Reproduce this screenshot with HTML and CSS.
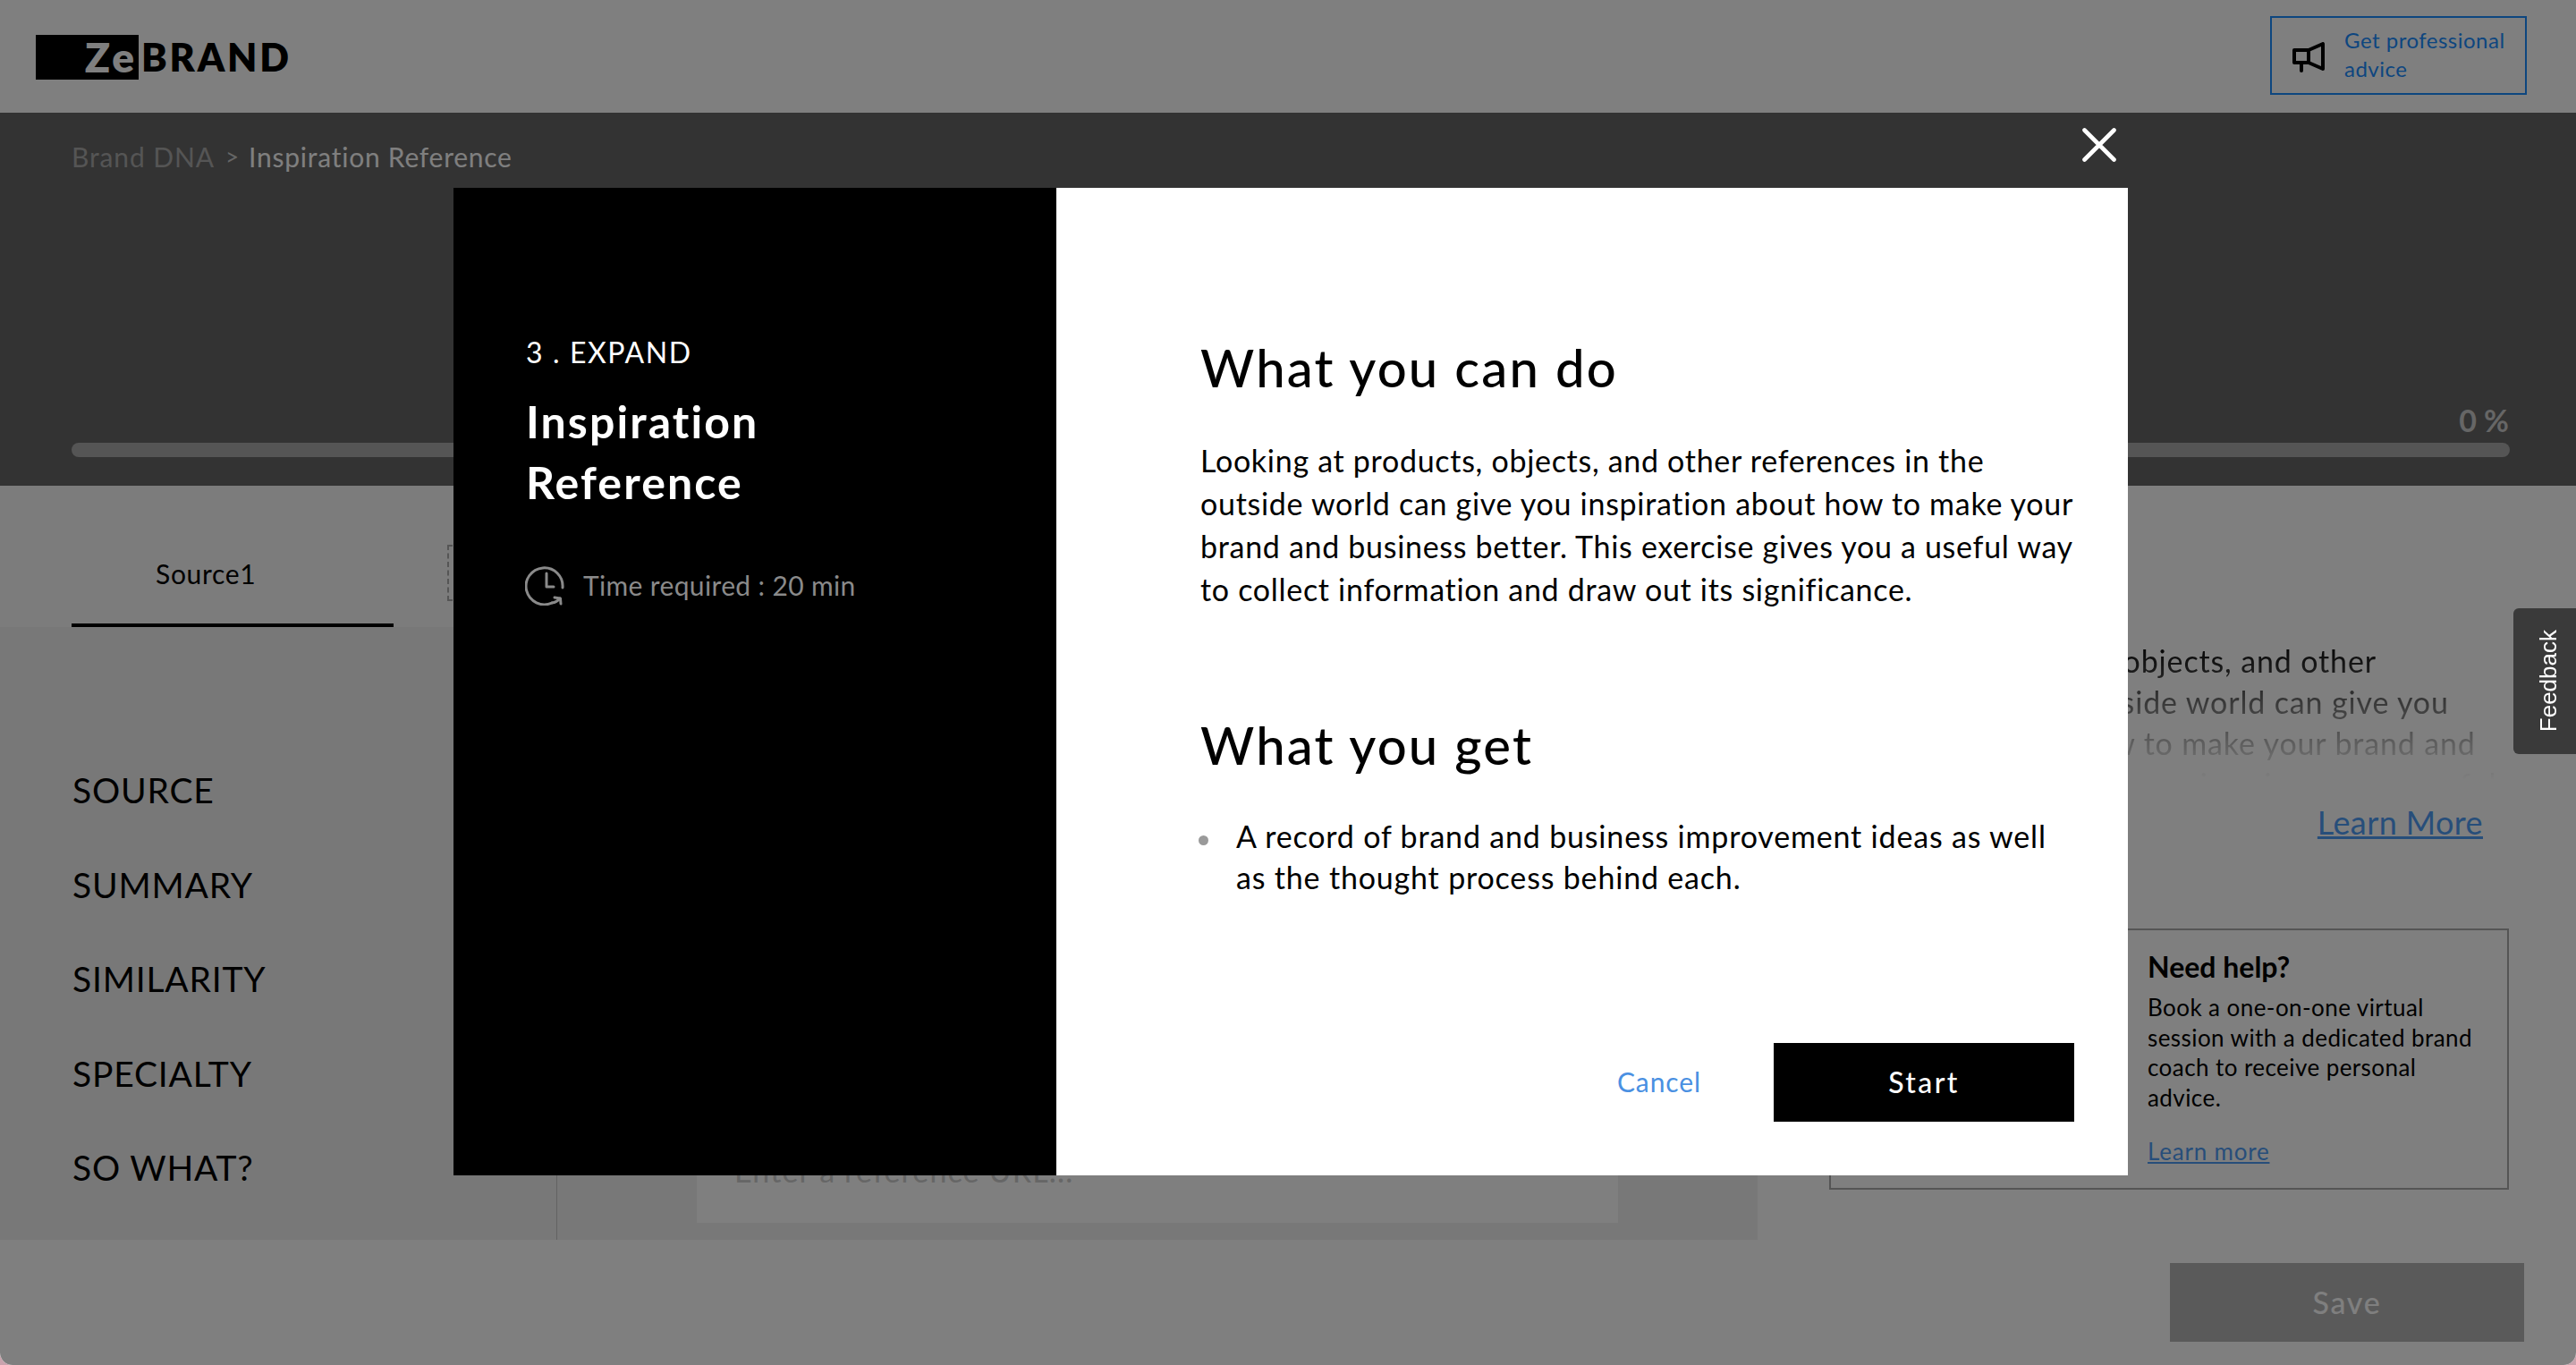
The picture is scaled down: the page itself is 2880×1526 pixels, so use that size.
FILE: index.html
```html
<!DOCTYPE html>
<html lang="en">
<head>
<meta charset="utf-8">
<title>ZeBRAND</title>
<link rel="stylesheet" href="styles.css">
</head>
<body>
<div class="page">
  <header class="topbar">
    <div class="logo"><span class="logo-mark">Ze</span><span class="logo-word">BRAND</span></div>
    <a class="advice">
      <svg class="advice-icon" viewBox="0 0 36 34" width="36" height="34" fill="none" stroke="#000" stroke-width="4" stroke-linecap="round" stroke-linejoin="round"><path d="M2 9h16v14H2z"/><path d="M18 9 34 2v28l-16-7"/><path d="M10 23v9"/></svg>
      <span class="advice-text">Get professional<br>advice</span>
    </a>
  </header>

  <section class="hero">
    <nav class="crumbs"><span class="crumb-dim">Brand DNA</span><span class="crumb-sep">&gt;</span><span class="crumb-now">Inspiration Reference</span></nav>
    <div class="percent">0 %</div>
    <div class="bar"></div>
  </section>

  <section class="workspace">
    <div class="work-left">
      <div class="tabs">
        <div class="tab">Source1</div>
        <div class="tab-add"></div>
      </div>
      <div class="work-main">
        <ul class="steps">
          <li>SOURCE</li>
          <li>SUMMARY</li>
          <li>SIMILARITY</li>
          <li>SPECIALTY</li>
          <li>SO WHAT?</li>
        </ul>
        <div class="editor">
          <div class="field">Enter a reference URL...</div>
        </div>
      </div>
    </div>
    <aside class="work-right">
      <p class="intro">Looking at products, objects, and other<br>references in the outside world can give you<br>inspiration about how to make your brand and<br>business better. This exercise gives you a useful</p>
      <a class="more">Learn More</a>
      <div class="help">
        <h3 class="help-title">Need help?</h3>
        <p class="help-text">Book a one-on-one virtual<br>session with a dedicated brand<br>coach to receive personal<br>advice.</p>
        <a class="help-link">Learn more</a>
      </div>
    </aside>
  </section>

  <footer class="footer"><button class="save">Save</button></footer>

  <div class="overlay">
    <div class="modal">
      <svg class="close" viewBox="0 0 38 38" width="38" height="38" fill="none" stroke="#fff" stroke-width="4.6" stroke-linecap="round"><path d="M2.5 2.5 35.5 35.5M35.5 2.5 2.5 35.5"/></svg>
      <div class="modal-side">
        <div class="side-step">3 . EXPAND</div>
        <h2 class="side-title">Inspiration<br>Reference</h2>
        <div class="side-time">
          <svg viewBox="0 0 44 44" width="44" height="44" fill="none" stroke="#8a8a8a" stroke-width="3" stroke-linecap="round" stroke-linejoin="round"><path d="M42 24A20.5 20.5 0 1 0 30 41"/><path d="M24 8v15h8"/><path d="M30 41c4-.5 7-2.500 9-5"/><path d="M33 35l6.500 1 .5 6"/></svg>
          <span class="side-time-text">Time required : 20 min</span>
        </div>
      </div>
      <div class="modal-body">
        <h2 class="body-head">What you can do</h2>
        <p class="body-text">Looking at products, objects, and other references in the<br>outside world can give you inspiration about how to make your<br>brand and business better. This exercise gives you a useful way<br>to collect information and draw out its significance.</p>
        <h2 class="body-head body-head-2">What you get</h2>
        <ul class="body-list"><li>A record of brand and business improvement ideas as well<br>as the thought process behind each.</li></ul>
        <div class="actions">
          <a class="cancel">Cancel</a>
          <button class="start">Start</button>
        </div>
      </div>
    </div>
  </div>

  <div class="feedback"><span>Feedback</span></div>
</div>
</body>
</html>
```
FILE: styles.css
```css
* { box-sizing: border-box; }
html, body { margin: 0; padding: 0; }
body { background: #c9a3ad; font-family: "Lato", "Noto Sans", sans-serif; color: #000; }
h2, h3, p, ul { margin: 0; padding: 0; }
ul { list-style: none; }

.page { position: relative; width: 2880px; height: 1526px; overflow: hidden; background: #fff; border-radius: 0 0 14px 14px; }

.topbar { height: 126px; background: #fff; display: flex; align-items: flex-start; justify-content: space-between; padding: 18px 55px 0 40px; }
.logo { display: flex; align-items: center; margin-top: 21px; font-weight: 800; font-size: 43px; line-height: 50px; }
.logo-mark { width: 115px; height: 50px; background: #000; color: #fff; text-align: right; padding-right: 2px; font-size: 46px; letter-spacing: 3px; }
.logo-word { margin-left: 3px; letter-spacing: 2.8px; }

.advice { width: 287px; height: 88px; border: 2px solid #1a8cff; display: flex; align-items: center; gap: 22px; padding: 0 0 0 23px; color: #1a8cff; }
.advice-icon { flex: none; margin-top: 4px; }
.advice-text { font-size: 24px; line-height: 32px; margin-top: -2px; letter-spacing: .5px; }

.hero { height: 417px; background: #666; display: flex; flex-direction: column; padding: 29px 74px 32px 80px; }
.crumbs { display: flex; font-size: 30px; line-height: 40px; }
.crumb-dim { color: #aaa; letter-spacing: .9px; }
.crumb-sep { color: #ccc; margin: 0 11px 0 12px; font-size: 26px; }
.crumb-now { color: #fff; letter-spacing: .75px; }
.percent { margin-top: auto; align-self: flex-end; font-size: 34px; line-height: 36px; font-weight: 700; color: #ccc; margin-right: 1px; }
.bar { margin-top: 7px; height: 16px; border-radius: 8px; background: #aaa; }

.workspace { height: 843px; display: flex; }
.work-left { width: 1965px; flex: none; display: flex; flex-direction: column; }
.tabs { height: 158px; background: #f8f8f8; display: flex; padding-left: 80px; }
.tab { width: 360px; margin-top: 66px; border-bottom: 4px solid #000; padding: 12px 0 0 94px; font-size: 30px; line-height: 40px; letter-spacing: .7px; }
.tab-add { width: 240px; height: 63px; margin: 66px 0 0 60px; border: 2px dashed #aaa; }
.work-main { flex: 1; display: flex; background: #f1f1f1; }
.steps { width: 623px; flex: none; border-right: 1px solid #c4c4c4; padding: 130px 0 0 81px; font-size: 39px; line-height: 105.500px; letter-spacing: .8px; }
.editor { flex: 1; display: flex; align-items: flex-end; padding: 0 156px 19px 156px; }
.field { width: 100%; height: 107px; background: #fff; padding: 29px 0 0 42px; font-size: 34px; line-height: 40px; color: #ccc; letter-spacing: 1.15px; }

.work-right { flex: 1; background: #fff; padding: 173px 75px 0 80px; display: flex; flex-direction: column; }
.intro { height: 180px; overflow: hidden; font-size: 34px; line-height: 46px; letter-spacing: .85px; white-space: nowrap; -webkit-mask-image: linear-gradient(#000 0, transparent 156px); mask-image: linear-gradient(#000 0, transparent 156px); }
.more { align-self: flex-end; margin-right: 29px; font-size: 36px; line-height: 46px; letter-spacing: .4px; color: #4f9cf5; text-decoration: underline; }
.help { margin-top: 96px; height: 292px; border: 2px solid #aaa; padding: 21px 0 0 354px; }
.help-title { font-size: 32px; line-height: 40px; font-weight: 700; }
.help-text { margin-top: 9px; font-size: 26px; line-height: 33.500px; letter-spacing: .43px; white-space: nowrap; }
.help-link { display: block; margin-top: 27px; font-size: 26px; line-height: 33.500px; letter-spacing: .8px; color: #4f9cf5; text-decoration: underline; }

.footer { height: 140px; background: #fff; display: flex; justify-content: flex-end; padding: 26px 58px 0 0; }
.save { width: 396px; height: 88px; border: 0; background: #b4b4b4; color: #fff; font: 500 34px/88px "Lato", sans-serif; letter-spacing: 1.8px; padding: 0; }

.overlay { position: absolute; inset: 0; background: rgba(0, 0, 0, .5); padding: 210px 0 0 507px; }
.modal { position: relative; width: 1872px; height: 1104px; display: flex; background: #fff; }
.close { position: absolute; top: -67px; right: 13px; }
.modal-side { width: 674px; flex: none; background: #000; color: #fff; padding: 164px 0 0 81px; }
.side-step { font-size: 32px; line-height: 40px; letter-spacing: 1.6px; }
.side-title { margin-top: 23px; font-size: 50px; line-height: 68px; font-weight: 700; letter-spacing: 2.1px; }
.side-time { display: flex; align-items: center; gap: 21px; margin-top: 60px; margin-left: -1px; font-size: 30px; line-height: 40px; letter-spacing: .36px; color: #8a8a8a; }
.side-time-text { margin-top: -2px; }

.modal-body { flex: 1; display: flex; flex-direction: column; padding: 166px 60px 60px 161px; }
.body-head { font-size: 58px; line-height: 70px; font-weight: 500; letter-spacing: 2.2px; white-space: nowrap; }
.body-head-2 { margin-top: 115px; }
.body-text { margin-top: 45px; font-size: 34px; line-height: 48px; letter-spacing: .7px; white-space: nowrap; }
.body-list { margin-top: 44px; font-size: 34px; line-height: 46px; letter-spacing: .82px; white-space: nowrap; }
.body-list li { position: relative; padding-left: 40px; }
.body-list li::before { content: ""; position: absolute; left: -2px; top: 22px; width: 11px; height: 11px; border-radius: 50%; background: #9a9a9a; }
.actions { margin-top: auto; display: flex; justify-content: flex-end; align-items: center; gap: 81px; }
.cancel { font-size: 30px; line-height: 40px; letter-spacing: .9px; color: #4a90e2; margin-top: -2px; }
.start { width: 336px; height: 88px; border: 0; background: #000; color: #fff; font: 500 32px/88px "Lato", sans-serif; letter-spacing: 2.4px; padding: 0; }

.feedback { position: absolute; top: 680px; right: 0; width: 70px; height: 163px; background: #3a3a3a; border-radius: 6px 0 0 6px; display: flex; align-items: center; justify-content: center; padding-left: 9px; }
.feedback span { writing-mode: vertical-rl; transform: rotate(180deg); font-family: "Liberation Sans", sans-serif; font-size: 26px; color: #fff; }
```
